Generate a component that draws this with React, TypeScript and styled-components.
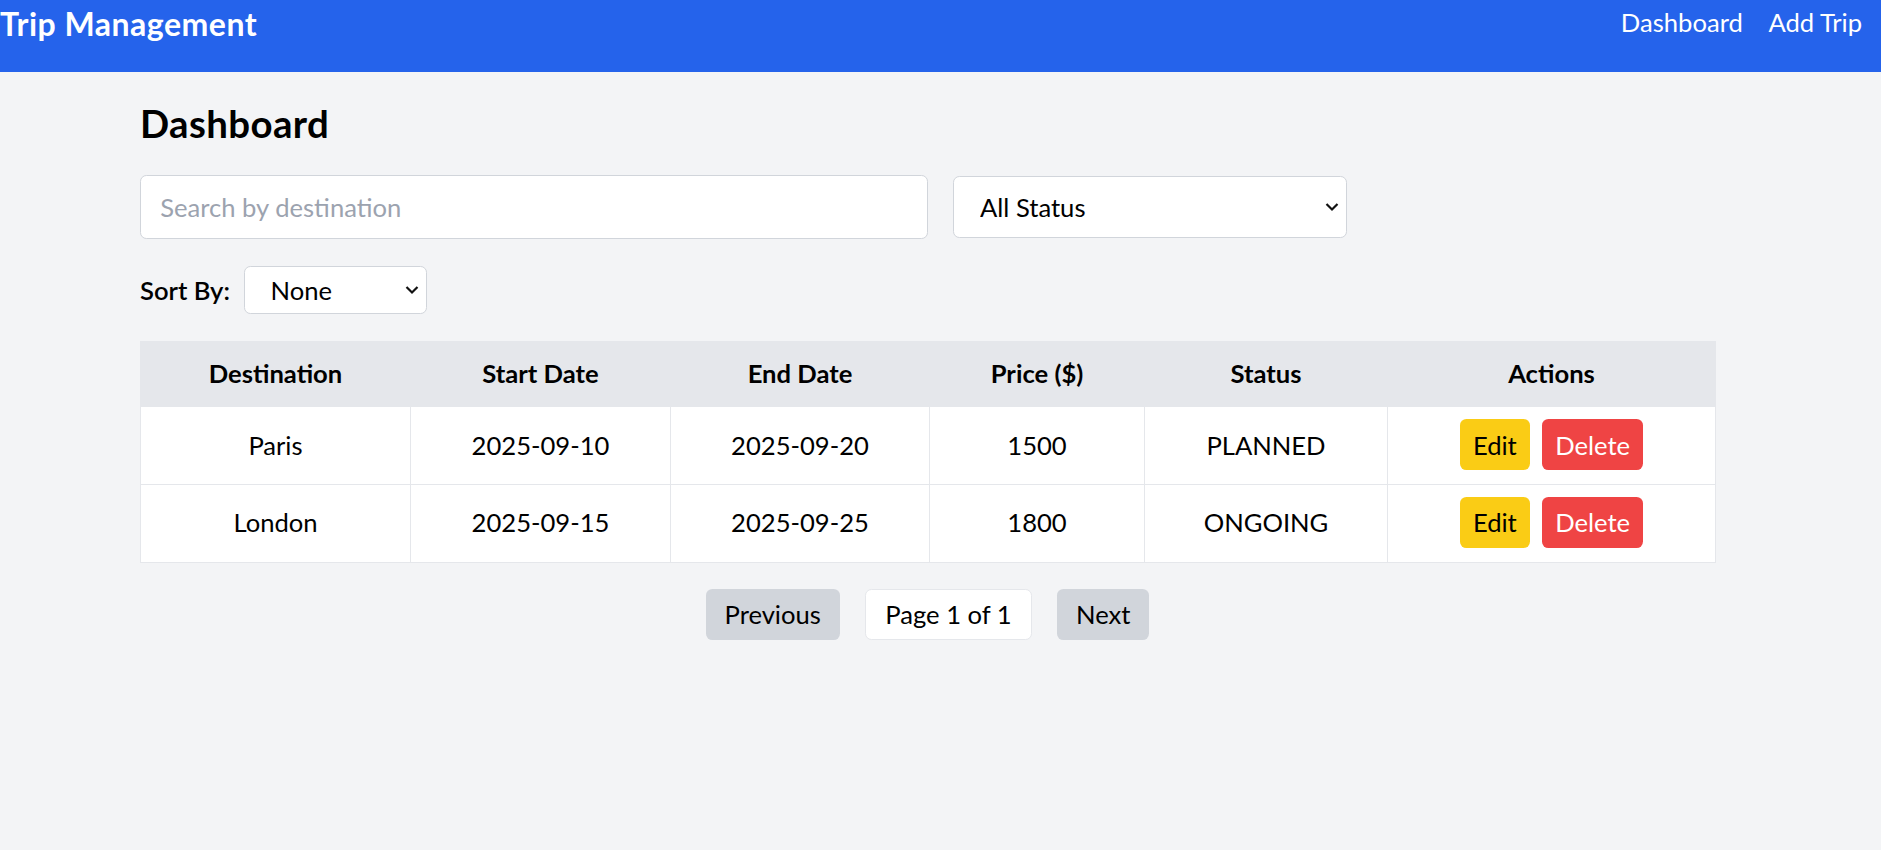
import React from "react";
import styled, { createGlobalStyle } from "styled-components";

const GlobalStyle = createGlobalStyle`
  html, body { margin: 0; padding: 0; background: #f3f4f6; }
  body { font-family: Lato, "Noto Sans", sans-serif; color: #000; }
  * { box-sizing: border-box; }
`;

const Page = styled.div`
  min-height: 850px;
  background: #f3f4f6;
  overflow: hidden;
`;

const Nav = styled.header`
  height: 72px;
  background: #2563eb;
  color: #fff;
  display: flex;
  justify-content: space-between;
  align-items: flex-start;
  padding-right: 19px;
`;

const Brand = styled.h1`
  margin: 2px 0 0 0;
  font-size: 32px;
  font-weight: 700;
  line-height: 44.8px;
  letter-spacing: 0.5px;
  white-space: nowrap;
`;

const NavLinks = styled.nav`
  display: flex;
  align-items: center;
  gap: 25.6px;
  height: 44.8px;
`;

const NavLink = styled.a`
  color: #fff;
  text-decoration: none;
  font-size: 25.6px;
  line-height: 38.4px;
`;

const Main = styled.main`
  margin-left: 140px;
  width: 1575px;
  padding-top: 26px;
`;

const Heading = styled.h2`
  margin: 0 0 26px;
  font-size: 38.4px;
  line-height: 51.2px;
  font-weight: 700;
  letter-spacing: 0.4px;
`;

const Filters = styled.div`
  display: grid;
  grid-template-columns: 788px 394px;
  gap: 25px;
  align-items: center;
`;

const SearchInput = styled.input`
  height: 64px;
  padding: 0 19.2px;
  border: 1px solid #d1d5db;
  border-radius: 6.4px;
  background: #fff;
  font-family: inherit;
  font-size: 25.6px;
  color: #000;
  outline: none;
  &::placeholder { color: #9ca3af; }
`;

const SelectWrap = styled.div<{ $width: number }>`
  position: relative;
  width: ${(p) => p.$width}px;
`;

const Select = styled.select<{ $height: number }>`
  appearance: none;
  -webkit-appearance: none;
  width: 100%;
  height: ${(p) => p.$height}px;
  padding: 0 40px 0 26px;
  border: 1px solid #d1d5db;
  border-radius: 6.4px;
  background: #fff;
  font-family: inherit;
  font-size: 25.6px;
  color: #000;
  outline: none;
`;

const Chevron = styled.svg`
  position: absolute;
  right: 8px;
  top: 50%;
  transform: translateY(-50%);
  pointer-events: none;
`;

const SortRow = styled.div`
  display: flex;
  align-items: center;
  gap: 13.6px;
  margin-top: 27px;
`;

const SortLabel = styled.label`
  font-size: 25.6px;
  line-height: 38.4px;
  font-weight: 600;
`;

const Table = styled.table`
  margin-top: 27px;
  width: 1575px;
  table-layout: fixed;
  border-collapse: collapse;
  background: #fff;
  border: 1px solid #e5e7eb;
`;

const Th = styled.th`
  background: #e5e7eb;
  font-size: 25.6px;
  line-height: 38.4px;
  font-weight: 700;
  padding: 12px 12.8px 13.6px;
  text-align: center;
  border: 1px solid #e5e7eb;
`;

const Td = styled.td`
  font-size: 25.6px;
  line-height: 38.4px;
  padding: 12px 12.8px 13.6px;
  text-align: center;
  vertical-align: middle;
  border: 1px solid #e5e7eb;
`;

const Actions = styled.div`
  display: flex;
  justify-content: center;
  gap: 12.8px;
`;

const Button = styled.button<{ $variant: "edit" | "delete" | "page" }>`
  border: none;
  border-radius: 6.4px;
  padding: 6.4px ${(p) => (p.$variant === "page" ? "18.8px" : "12.8px")};
  font-family: inherit;
  font-size: 25.6px;
  line-height: 38.4px;
  cursor: pointer;
  background: ${(p) =>
    p.$variant === "edit" ? "#facc15" : p.$variant === "delete" ? "#ef4444" : "#d1d5db"};
  color: ${(p) => (p.$variant === "delete" ? "#fff" : "#000")};
`;

const Pagination = styled.div`
  display: flex;
  justify-content: center;
  align-items: center;
  gap: 25.6px;
  margin-top: 26px;
`;

const PageInfo = styled.span`
  background: #fff;
  border: 1px solid #e5e7eb;
  border-radius: 6.4px;
  padding: 5.4px 19px;
  font-size: 25.6px;
  line-height: 38.4px;
`;

const ChevronIcon = () => (
  <Chevron width="14" height="9" viewBox="0 0 14 9">
    <polyline points="1.5,1.5 7,7 12.5,1.5" fill="none" stroke="#111" strokeWidth="2.2" />
  </Chevron>
);

const columns = [
  { label: "Destination", width: 270 },
  { label: "Start Date", width: 260 },
  { label: "End Date", width: 259 },
  { label: "Price ($)", width: 215 },
  { label: "Status", width: 243 },
  { label: "Actions", width: 328 },
];

const trips = [
  { dest: "Paris", start: "2025-09-10", end: "2025-09-20", price: 1500, status: "PLANNED" },
  { dest: "London", start: "2025-09-15", end: "2025-09-25", price: 1800, status: "ONGOING" },
];

export default function App() {
  return (
    <Page>
      <GlobalStyle />
      <Nav>
        <Brand>Trip Management</Brand>
        <NavLinks>
          <NavLink href="#">Dashboard</NavLink>
          <NavLink href="#">Add Trip</NavLink>
        </NavLinks>
      </Nav>
      <Main>
        <Heading>Dashboard</Heading>
        <Filters>
          <SearchInput placeholder="Search by destination" />
          <SelectWrap $width={394}>
            <Select $height={62} defaultValue="">
              <option value="">All Status</option>
              <option value="PLANNED">PLANNED</option>
              <option value="ONGOING">ONGOING</option>
              <option value="COMPLETED">COMPLETED</option>
            </Select>
            <ChevronIcon />
          </SelectWrap>
        </Filters>
        <SortRow>
          <SortLabel>Sort By:</SortLabel>
          <SelectWrap $width={183}>
            <Select $height={48} defaultValue="">
              <option value="">None</option>
              <option value="price">Price</option>
              <option value="start">Start Date</option>
            </Select>
            <ChevronIcon />
          </SelectWrap>
        </SortRow>
        <Table>
          <colgroup>
            {columns.map((c) => (
              <col key={c.label} style={{ width: c.width }} />
            ))}
          </colgroup>
          <thead>
            <tr>
              {columns.map((c) => (
                <Th key={c.label}>{c.label}</Th>
              ))}
            </tr>
          </thead>
          <tbody>
            {trips.map((t) => (
              <tr key={t.dest}>
                <Td>{t.dest}</Td>
                <Td>{t.start}</Td>
                <Td>{t.end}</Td>
                <Td>{t.price}</Td>
                <Td>{t.status}</Td>
                <Td>
                  <Actions>
                    <Button $variant="edit">Edit</Button>
                    <Button $variant="delete">Delete</Button>
                  </Actions>
                </Td>
              </tr>
            ))}
          </tbody>
        </Table>
        <Pagination>
          <Button $variant="page">Previous</Button>
          <PageInfo>Page 1 of 1</PageInfo>
          <Button $variant="page">Next</Button>
        </Pagination>
      </Main>
    </Page>
  );
}
